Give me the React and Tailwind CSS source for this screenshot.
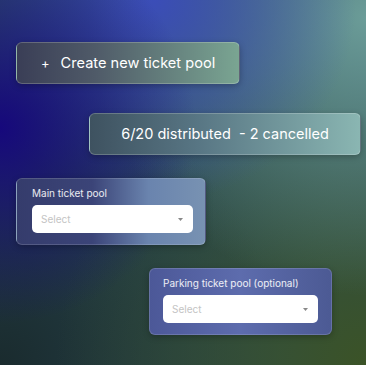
const bg =
  "bg-[radial-gradient(circle_at_0%_35%,#16087c_0%,transparent_45%),radial-gradient(circle_at_42%_0%,#3b4db8_0%,transparent_48%),radial-gradient(circle_at_100%_5%,#6b9c98_0%,transparent_55%),radial-gradient(circle_at_100%_100%,#3b5327_0%,transparent_60%),radial-gradient(circle_at_0%_100%,#1a2b2e_0%,transparent_55%),linear-gradient(#2a4a55,#2a4a55)]";

const Caret = () => (
  <svg width="5" height="3" viewBox="0 0 5 3" className="fill-[#888]">
    <path d="M0 0 L5 0 L2.5 3 Z" />
  </svg>
);

const PoolSelect = ({ label, className }) => (
  <div
    className={`rounded-md border border-white/15 shadow-[0_2px_6px_rgba(0,0,0,0.25)] pt-[8px] pb-[11px] ${className}`}
  >
    <p className="text-[10px] leading-[13px] text-white/90 mb-[5px]">{label}</p>
    <div className="h-[28px] bg-white rounded-[5px] flex items-center justify-between pl-[9px] pr-[10px]">
      <span className="text-[10px] text-[#c4c4c4]">Select</span>
      <Caret />
    </div>
  </div>
);

export default function App() {
  return (
    <div
      className={`w-[366px] h-[365px] overflow-hidden ${bg} font-['Inter',sans-serif] flex flex-col pt-[42px]`}
    >
      <button className="ml-[16px] w-[224px] h-[42px] rounded-md border border-white/20 bg-[linear-gradient(90deg,#3a3e56_0%,#4f5a68_35%,#7aa592_100%)] shadow-[0_2px_6px_rgba(0,0,0,0.25)] flex items-center pl-[24px] text-white text-[14.6px] leading-none">
        <span className="mr-[11px] text-[13px] leading-none">+</span>
        Create new ticket pool
      </button>

      <div className="ml-[89px] mt-[29px] w-[272px] h-[42px] rounded-md border border-white/20 bg-[linear-gradient(90deg,#3e5260_0%,#587684_40%,#8ab6b2_100%)] shadow-[0_2px_6px_rgba(0,0,0,0.25)] flex items-center justify-center text-white text-[14.5px]">
        6/20 distributed&nbsp;&nbsp;- 2 cancelled
      </div>

      <PoolSelect
        label="Main ticket pool"
        className="ml-[16px] mt-[23px] w-[190px] pl-[15px] pr-[12px] bg-[linear-gradient(90deg,#353c6c_0%,#3b4478_40%,#6a84ae_70%,#7892b2_100%)]"
      />

      <PoolSelect
        label="Parking ticket pool (optional)"
        className="ml-[149px] mt-[23px] w-[183px] px-[13px] bg-[linear-gradient(90deg,#4c5898_0%,#5d6cad_50%,#4c5a94_100%)]"
      />
    </div>
  );
}
